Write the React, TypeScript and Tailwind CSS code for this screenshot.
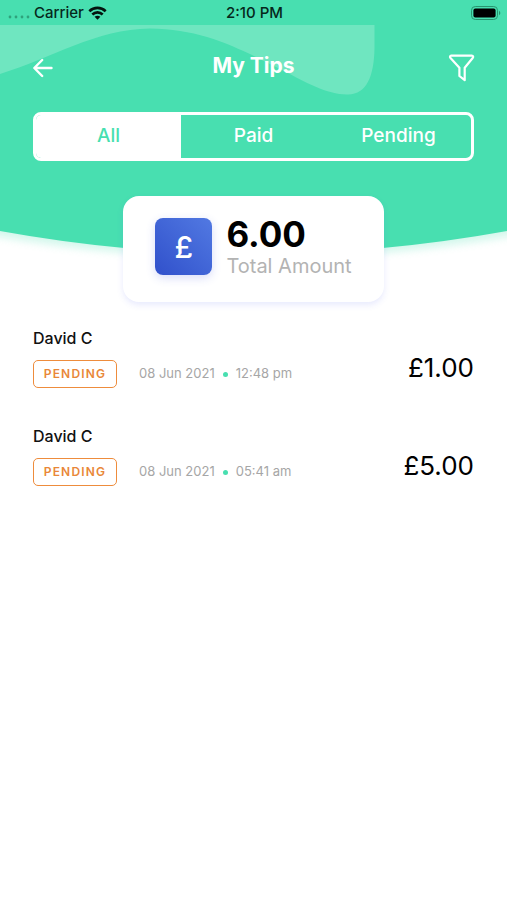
import React, { useState } from 'react';

const tabs = ['All', 'Paid', 'Pending'];

const tips = [
  { id: 1, name: 'David C', status: 'Pending', date: '08 Jun 2021', time: '12:48 pm', amount: '£1.00' },
  { id: 2, name: 'David C', status: 'Pending', date: '08 Jun 2021', time: '05:41 am', amount: '£5.00' },
];

const StatusBar = () => (
  <div className="grid h-[25px] grid-cols-3 items-center pl-2 pr-[6px] text-[15px] leading-6 font-medium text-[#06281c]">
    <div className="flex items-center">
      <svg className="mt-2 h-1 w-[22px] fill-[#2fa27c]" viewBox="0 0 22 4">
        <circle cx="2" cy="2" r="1.4" />
        <circle cx="8" cy="2" r="1.4" />
        <circle cx="14" cy="2" r="1.4" />
        <circle cx="20" cy="2" r="1.4" />
      </svg>
      <span className="ml-1">Carrier</span>
      <svg className="ml-1 h-[14px] w-[19px]" viewBox="0 0 18 14" fill="none" stroke="#04140e" strokeWidth="2.6">
        <path d="M.8 5.2C5.400 .7 12.600 .7 17.200 5.2" />
        <path d="M3.800 8.500c3-2.900 7.400-2.900 10.400 0" />
        <path d="M9 13.700 6.100 10.800c1.700-1.400 4.100-1.400 5.800 0z" fill="#04140e" stroke="none" />
      </svg>
    </div>
    <span className="text-center">2:10 PM</span>
    <svg className="h-[14px] w-[30px] justify-self-end" viewBox="0 0 30 14">
      <rect x="0.500" y="0.500" width="26" height="13" rx="3.800" fill="none" stroke="#27956f" />
      <rect x="2.400" y="2.400" width="22.200" height="9.200" rx="2" fill="#000" />
      <path d="M28 4.800c1.800.8 1.800 3.600 0 4.400z" fill="#27956f" />
    </svg>
  </div>
);

const HeaderBackground = () => (
  <div className="absolute inset-x-0 top-0 -z-10">
    <svg className="h-[270px] w-full" viewBox="0 0 507 270" preserveAspectRatio="none">
      <defs>
        <filter id="headerShadow" x="-5%" y="-5%" width="110%" height="115%">
          <feGaussianBlur stdDeviation="4" />
        </filter>
      </defs>
      <path d="M-20 0H527V233Q253.500 283 -20 233Z" fill="#48dfb0" opacity="0.250" filter="url(#headerShadow)" />
      <path d="M0 0H507V231Q253.500 277 0 231Z" fill="#48dfb0" />
      <path
        d="M0 25H374.500V48C374 76 367 94 348 94.500C328 95 305 82 284 71C242 50 205 29 150 28.500C96 29 52 58 0 74Z"
        fill="#6fe6c0"
      />
    </svg>
  </div>
);

const MyTips = () => {
  const [activeTab, setActiveTab] = useState('All');
  const visibleTips = tips.filter((tip) => activeTab === 'All' || tip.status === activeTab);

  return (
    <div className="relative isolate min-h-screen bg-white font-['Inter',sans-serif]">
      <HeaderBackground />
      <StatusBar />

      <header className="flex h-[57px] items-end justify-between px-8">
        <button type="button" aria-label="Back" className="flex h-7 w-7 items-center">
          <svg className="h-5 w-[21px]" viewBox="0 0 21 20" fill="none" stroke="#fff" strokeWidth="2.400" strokeLinecap="round" strokeLinejoin="round">
            <path d="M19.500 10H2.500M10.200 2 2.300 10l7.900 8" />
          </svg>
        </button>
        <h1 className="pb-px text-[21px] font-bold text-white">My Tips</h1>
        <button type="button" aria-label="Filter" className="w-7">
          <svg className="h-7 w-7" viewBox="0 0 28 28" fill="none" stroke="#fff" strokeWidth="2.200" strokeLinejoin="round">
            <path d="M4.200 1.700H24.800c1.400 0 1.800 1.300.9 2.300L17.700 13.800V26.200L12.400 22V13.800L3.500 4c-.9-1-.6-2.300.7-2.300z" />
          </svg>
        </button>
      </header>

      <div className="mx-[33px] mt-[30px] grid h-[49px] grid-cols-3 overflow-hidden rounded-lg border-[3px] border-white">
        {tabs.map((tab) => (
          <button
            key={tab}
            type="button"
            onClick={() => setActiveTab(tab)}
            className={activeTab === tab ? 'bg-white text-[19px] font-medium text-[#48dfb0]' : 'text-[19px] font-medium text-white'}
          >
            {tab}
          </button>
        ))}
      </div>

      <section className="mx-auto mt-[35px] flex h-[106px] w-fit gap-[14px] rounded-2xl bg-white px-8 pt-[22px] shadow-[0_3px_6px_rgba(80,90,240,0.130)]">
        <div className="flex size-[57px] items-center justify-center rounded-lg bg-linear-to-tr from-[#3150cb] to-[#5279e2] text-3xl font-medium text-white shadow-[0_3px_10px_rgba(60,80,220,0.200)]">
          £
        </div>
        <div>
          <p className="text-[35px] leading-8 font-bold text-black">6.00</p>
          <p className="text-xl leading-8 text-[#b3b3b3]">Total Amount</p>
        </div>
      </section>

      <ul className="px-[33px] pt-6">
        {visibleTips.map((tip) => (
          <li key={tip.id} className="flex h-[98px] items-start justify-between">
            <div>
              <h2 className="text-base font-medium text-[#111]">{tip.name}</h2>
              <div className="mt-[10px] flex items-center text-[13px] text-[#a6a6a6]">
                <span className="flex h-7 w-[84px] items-center justify-center rounded-[5px] border border-[#ee8c3c] text-xs font-semibold tracking-widest text-[#e98738] uppercase">
                  {tip.status}
                </span>
                <span className="ml-[22px]">{tip.date}</span>
                <span className="mx-2 size-[5px] rounded-full bg-[#48dfb0]" />
                <span>{tip.time}</span>
              </div>
            </div>
            <p className="pt-[22px] text-[26px] text-black">{tip.amount}</p>
          </li>
        ))}
      </ul>
    </div>
  );
};

export default MyTips;
